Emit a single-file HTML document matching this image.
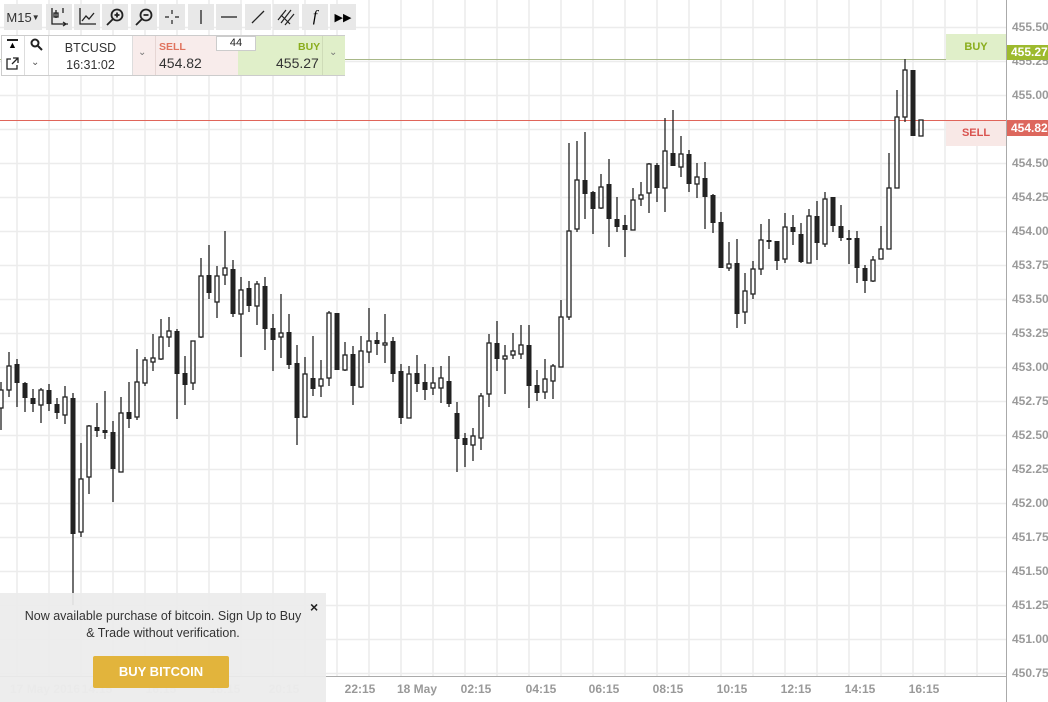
<!DOCTYPE html>
<html><head><meta charset="utf-8"><style>
*{margin:0;padding:0;box-sizing:border-box}
body{width:1048px;height:702px;overflow:hidden;background:#fff;font-family:"Liberation Sans",sans-serif;position:relative}
.tb{position:absolute;top:4px;height:26px;width:26px;background:#e8e8e8;display:flex;align-items:center;justify-content:center}
.pl{position:absolute;left:1012px;font-size:12px;color:#9a9a9a;font-weight:bold}
.tl{position:absolute;top:682px;font-size:12px;color:#999;font-weight:bold;transform:translateX(-50%);white-space:nowrap}
</style></head><body>
<svg width="1048" height="702" style="position:absolute;left:0;top:0">
<g stroke="#ececec" stroke-width="1.5">
<line x1="0" y1="27.5" x2="1006" y2="27.5"/><line x1="0" y1="61.5" x2="1006" y2="61.5"/><line x1="0" y1="95.5" x2="1006" y2="95.5"/><line x1="0" y1="129.5" x2="1006" y2="129.5"/><line x1="0" y1="163.5" x2="1006" y2="163.5"/><line x1="0" y1="197.5" x2="1006" y2="197.5"/><line x1="0" y1="231.5" x2="1006" y2="231.5"/><line x1="0" y1="265.5" x2="1006" y2="265.5"/><line x1="0" y1="299.5" x2="1006" y2="299.5"/><line x1="0" y1="333.5" x2="1006" y2="333.5"/><line x1="0" y1="367.5" x2="1006" y2="367.5"/><line x1="0" y1="401.5" x2="1006" y2="401.5"/><line x1="0" y1="435.5" x2="1006" y2="435.5"/><line x1="0" y1="469.5" x2="1006" y2="469.5"/><line x1="0" y1="503.5" x2="1006" y2="503.5"/><line x1="0" y1="537.5" x2="1006" y2="537.5"/><line x1="0" y1="571.5" x2="1006" y2="571.5"/><line x1="0" y1="605.5" x2="1006" y2="605.5"/><line x1="0" y1="639.5" x2="1006" y2="639.5"/><line x1="0" y1="673.5" x2="1006" y2="673.5"/>
<line x1="17" y1="0" x2="17" y2="676"/><line x1="49" y1="0" x2="49" y2="676"/><line x1="81" y1="0" x2="81" y2="676"/><line x1="113" y1="0" x2="113" y2="676"/><line x1="145" y1="0" x2="145" y2="676"/><line x1="177" y1="0" x2="177" y2="676"/><line x1="209" y1="0" x2="209" y2="676"/><line x1="241" y1="0" x2="241" y2="676"/><line x1="273" y1="0" x2="273" y2="676"/><line x1="305" y1="0" x2="305" y2="676"/><line x1="337" y1="0" x2="337" y2="676"/><line x1="369" y1="0" x2="369" y2="676"/><line x1="401" y1="0" x2="401" y2="676"/><line x1="433" y1="0" x2="433" y2="676"/><line x1="465" y1="0" x2="465" y2="676"/><line x1="497" y1="0" x2="497" y2="676"/><line x1="529" y1="0" x2="529" y2="676"/><line x1="561" y1="0" x2="561" y2="676"/><line x1="593" y1="0" x2="593" y2="676"/><line x1="625" y1="0" x2="625" y2="676"/><line x1="657" y1="0" x2="657" y2="676"/><line x1="689" y1="0" x2="689" y2="676"/><line x1="721" y1="0" x2="721" y2="676"/><line x1="753" y1="0" x2="753" y2="676"/><line x1="785" y1="0" x2="785" y2="676"/><line x1="817" y1="0" x2="817" y2="676"/><line x1="849" y1="0" x2="849" y2="676"/><line x1="881" y1="0" x2="881" y2="676"/><line x1="913" y1="0" x2="913" y2="676"/><line x1="945" y1="0" x2="945" y2="676"/><line x1="977" y1="0" x2="977" y2="676"/>
</g>
<line x1="0" y1="59.5" x2="1006" y2="59.5" stroke="#a8b888" stroke-width="1"/>
<line x1="0" y1="120.5" x2="1006" y2="120.5" stroke="#e0655a" stroke-width="1"/>
<line x1="1006.5" y1="0" x2="1006.5" y2="702" stroke="#aaa"/>
<line x1="0" y1="676.5" x2="1006" y2="676.5" stroke="#aaa"/>
<g id="c" stroke="#222" stroke-width="1.3"></g>
</svg>
<script>
var d=[[1,390,408,382,430,0],[9,366,390,352,397,0],[17,364,383,359,407,1],[25,383,398,382,412,1],[33,398,404,389,412,1],[41,390,405,388,423,0],[49,390,404,384,411,1],[57,404,413,398,419,1],[65,397,415,386,424,0],[73,398,534,393,605,1],[81,479,532,443,537,0],[89,426,477,425,494,0],[97,427,431,403,437,1],[105,430,433,391,439,1],[113,432,469,421,502,1],[121,413,472,397,472,0],[129,412,419,382,428,1],[137,382,417,349,420,0],[145,360,383,357,386,0],[153,358,362,334,371,0],[161,337,359,319,360,0],[169,331,337,317,347,0],[177,331,374,329,419,1],[185,373,385,356,405,1],[193,341,383,341,390,0],[201,276,337,258,338,0],[209,275,293,245,299,1],[217,276,302,266,318,0],[225,268,275,231,285,0],[233,269,314,260,317,1],[241,290,314,277,357,0],[249,288,306,281,312,1],[257,284,306,281,325,0],[265,286,329,277,350,1],[273,328,340,314,371,1],[281,333,337,294,358,0],[289,332,365,314,369,1],[297,363,418,345,445,1],[305,374,417,357,418,0],[313,378,389,336,396,1],[321,379,386,360,397,0],[329,313,378,311,386,0],[337,313,370,313,370,1],[345,355,370,342,371,0],[353,354,386,346,405,1],[361,351,387,336,388,0],[369,341,352,308,363,0],[377,340,344,332,355,1],[385,343,345,314,363,0],[393,341,374,337,382,1],[401,371,418,364,424,1],[409,374,418,366,418,0],[417,373,384,355,392,1],[425,382,390,364,400,1],[433,383,388,367,395,0],[441,378,388,366,403,0],[449,381,404,356,407,1],[457,413,439,402,472,1],[465,438,445,433,467,1],[473,436,445,428,461,0],[481,396,438,393,450,0],[489,343,394,334,407,0],[497,343,359,321,371,1],[505,356,359,345,394,0],[513,351,355,333,359,0],[521,345,354,325,359,0],[529,345,386,325,408,1],[537,385,393,370,401,1],[545,379,392,359,399,0],[553,366,381,364,399,0],[561,317,367,300,367,0],[569,231,317,143,320,0],[577,180,229,141,232,0],[585,180,194,132,219,1],[593,192,209,191,234,1],[601,187,208,174,209,0],[609,184,219,159,247,1],[617,219,227,197,232,1],[625,225,230,215,257,1],[633,200,230,188,230,0],[641,195,199,182,206,0],[649,164,193,163,213,0],[657,165,188,163,202,1],[665,151,188,118,212,0],[673,153,166,110,166,1],[681,154,167,136,177,0],[689,154,184,150,192,1],[697,177,184,163,198,0],[705,178,197,162,229,1],[713,195,223,194,233,1],[721,222,268,212,268,1],[729,264,268,242,271,0],[737,263,314,239,328,1],[745,291,312,273,324,0],[753,269,294,261,299,0],[761,240,269,224,275,0],[769,240,242,219,249,1],[777,241,261,241,270,1],[785,227,259,213,263,0],[793,227,232,215,245,1],[801,234,262,223,263,1],[809,216,263,209,263,0],[817,216,243,201,260,1],[825,199,244,192,247,0],[833,197,226,197,232,1],[841,226,238,205,241,1],[849,238,239,230,264,1],[857,238,268,231,283,1],[865,268,281,265,293,1],[873,260,281,256,282,0],[881,249,259,226,259,0],[889,188,249,153,249,0],[897,117,188,90,188,0],[905,70,117,59,122,0],[913,70,136,70,136,1],[921,120,136,120,136,0]];
var s='';d.forEach(function(a){var c=a[0];s+='<line x1="'+c+'" y1="'+a[3]+'" x2="'+c+'" y2="'+a[4]+'"/>';var h=Math.max(a[2]-a[1],2);
if(a[5])s+='<rect x="'+(c-2.5)+'" y="'+a[1]+'" width="5" height="'+h+'" fill="#222" stroke="none"/>';else s+='<rect x="'+(c-2)+'" y="'+a[1]+'" width="4" height="'+h+'" fill="#fff"/>';});
document.getElementById('c').innerHTML=s;
</script>
<div class="pl" style="top:20px">455.50</div><div class="pl" style="top:54px">455.25</div><div class="pl" style="top:88px">455.00</div><div class="pl" style="top:156px">454.50</div><div class="pl" style="top:190px">454.25</div><div class="pl" style="top:224px">454.00</div><div class="pl" style="top:258px">453.75</div><div class="pl" style="top:292px">453.50</div><div class="pl" style="top:326px">453.25</div><div class="pl" style="top:360px">453.00</div><div class="pl" style="top:394px">452.75</div><div class="pl" style="top:428px">452.50</div><div class="pl" style="top:462px">452.25</div><div class="pl" style="top:496px">452.00</div><div class="pl" style="top:530px">451.75</div><div class="pl" style="top:564px">451.50</div><div class="pl" style="top:598px">451.25</div><div class="pl" style="top:632px">451.00</div><div class="pl" style="top:666px">450.75</div>
<div style="position:absolute;left:1007px;top:45px;width:41px;height:15px;background:#9dba2e;color:#fff;font-size:12px;font-weight:bold;padding-left:4px;line-height:15px">455.27</div>
<div style="position:absolute;left:1007px;top:120px;width:41px;height:16px;background:#dd675d;color:#fff;font-size:12px;font-weight:bold;padding-left:4px;line-height:16px">454.82</div>
<div style="position:absolute;left:946px;top:34px;width:60px;height:26px;background:#e0efc9;color:#8aad1d;font-size:11px;font-weight:bold;text-align:center;line-height:26px">BUY</div>
<div style="position:absolute;left:946px;top:121px;width:60px;height:25px;background:#f8e8e6;color:#d9534f;font-size:11px;font-weight:bold;text-align:center;line-height:25px">SELL</div>
<div class="tl" style="left:360px">22:15</div><div class="tl" style="left:417px">18 May</div><div class="tl" style="left:476px">02:15</div><div class="tl" style="left:541px">04:15</div><div class="tl" style="left:604px">06:15</div><div class="tl" style="left:668px">08:15</div><div class="tl" style="left:732px">10:15</div><div class="tl" style="left:796px">12:15</div><div class="tl" style="left:860px">14:15</div><div class="tl" style="left:924px">16:15</div>
<div class="tl" style="left:45px;color:#ccc">17 May 2016</div><div class="tl" style="left:97px;color:#ccc">14:15</div><div class="tl" style="left:161px;color:#ccc">16:15</div><div class="tl" style="left:225px;color:#ccc">18:15</div><div class="tl" style="left:284px;color:#ccc">20:15</div>
<div style="position:absolute;left:0;top:593px;width:326px;height:109px;background:rgba(236,236,236,0.93)"></div>
<div style="position:absolute;left:0;top:608px;width:326px;text-align:center;font-size:12.5px;color:#333;line-height:17px">Now available purchase of bitcoin. Sign Up to Buy<br>&amp; Trade without verification.</div>
<div style="position:absolute;left:310px;top:599px;font-size:14px;font-weight:bold;color:#222">×</div>
<div style="position:absolute;left:93px;top:656px;width:136px;height:32px;background:#e2b43c;border-radius:2px;color:#fff;font-weight:bold;font-size:13px;text-align:center;line-height:32px">BUY BITCOIN</div>
<div class="tb" style="left:4px;width:38px;font-size:13px;color:#333">M15<span style="font-size:8px">▼</span></div>
<div class="tb" style="left:46px"><svg width="20" height="20" stroke="#222" fill="none" stroke-width="1.3"><path d="M3 1v16h16M7 3v8M5 6h4v4H5zM14 1v5M14 15l3 2-3 2"/></svg></div>
<div class="tb" style="left:74px"><svg width="20" height="20" stroke="#222" fill="none" stroke-width="1.3"><path d="M3 1v16h16M5 14l4-5 3 3 5-6"/></svg></div>
<div class="tb" style="left:102px"><svg width="20" height="20" stroke="#222" fill="none" stroke-width="1.8"><circle cx="12" cy="8" r="5.5"/><path d="M8 12l-6 6M12 5.5v5M9.5 8h5"/></svg></div>
<div class="tb" style="left:131px"><svg width="20" height="20" stroke="#222" fill="none" stroke-width="1.8"><circle cx="12" cy="8" r="5.5"/><path d="M8 12l-6 6M9.5 8h5"/></svg></div>
<div class="tb" style="left:159px"><svg width="20" height="20" stroke="#222" stroke-width="1.2"><path d="M10 3v4M10 13v4M3 10h4M13 10h4"/></svg></div>
<div class="tb" style="left:188px"><svg width="20" height="20" stroke="#222" stroke-width="1.3"><path d="M10 3v14"/></svg></div>
<div class="tb" style="left:216px"><svg width="20" height="20" stroke="#222" stroke-width="1.3"><path d="M2 10h16"/></svg></div>
<div class="tb" style="left:245px"><svg width="20" height="20" stroke="#222" stroke-width="1.3"><path d="M4 16L16 4"/></svg></div>
<div class="tb" style="left:273px"><svg width="20" height="20" stroke="#222" stroke-width="1.2"><path d="M2 13l8-10M5 16l10-13M9 18l9-11M5 8l9 9"/></svg></div>
<div class="tb" style="left:302px;font-family:'Liberation Serif',serif;font-style:italic;font-size:16px">f</div>
<div class="tb" style="left:330px;font-size:11px">▶▶</div>
<div style="position:absolute;left:1px;top:35px;width:344px;height:41px;border:1px solid #ccc;background:#fff"></div>
<div style="position:absolute;left:24px;top:36px;width:1px;height:39px;background:#ddd"></div>
<div style="position:absolute;left:48px;top:36px;width:1px;height:39px;background:#ddd"></div>
<div style="position:absolute;left:8px;top:40px;font-size:9px">▲</div><div style="position:absolute;left:7px;top:39px;width:11px;height:1.5px;background:#222"></div>
<div style="position:absolute;left:6px;top:57px"><svg width="13" height="13" stroke="#222" fill="none" stroke-width="1.3"><path d="M5 2H1v10h10V8M7 1h5v5M12 1L6 7"/></svg></div>
<div style="position:absolute;left:30px;top:38px"><svg width="13" height="13" stroke="#222" fill="none" stroke-width="2"><circle cx="5" cy="5" r="3.5"/><path d="M8 8l4 4"/></svg></div>
<div style="position:absolute;left:31px;top:57px;font-size:10px;color:#555">⌄</div>
<div style="position:absolute;left:49px;top:40px;width:83px;text-align:center;font-size:12.5px;color:#333;line-height:17px">BTCUSD<br>16:31:02</div>
<div style="position:absolute;left:132px;top:36px;width:106px;height:39px;background:#f8eceb;border-left:1px solid #ddd"></div>
<div style="position:absolute;left:155px;top:36px;width:1px;height:39px;background:#e6d6d4"></div>
<div style="position:absolute;left:138px;top:47px;font-size:10px;color:#777">⌄</div>
<div style="position:absolute;left:159px;top:41px;font-size:10.5px;font-weight:bold;color:#e0735e">SELL</div>
<div style="position:absolute;left:159px;top:55px;font-size:14px;color:#333">454.82</div>
<div style="position:absolute;left:238px;top:36px;width:107px;height:39px;background:#e0efc9"></div>
<div style="position:absolute;left:322px;top:36px;width:1px;height:39px;background:#cfdcb8"></div>
<div style="position:absolute;left:298px;top:41px;font-size:10.5px;font-weight:bold;color:#8aad1d">BUY</div>
<div style="position:absolute;left:276px;top:55px;font-size:14px;color:#333">455.27</div>
<div style="position:absolute;left:329px;top:47px;font-size:10px;color:#777">⌄</div>
<div style="position:absolute;left:216px;top:36px;width:40px;height:15px;background:#fff;border:1px solid #ccc;font-size:11px;text-align:center;line-height:13px;color:#222">44</div>
</body></html>
